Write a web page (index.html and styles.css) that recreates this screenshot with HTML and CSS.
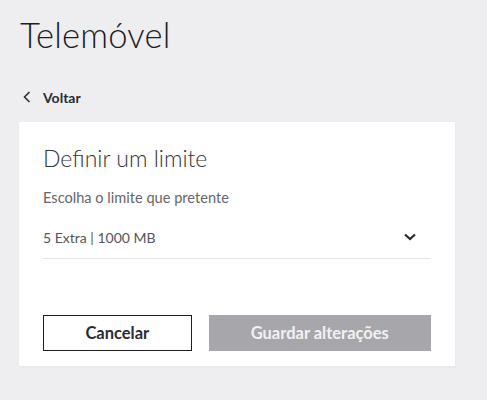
FILE: index.html
```html
<!DOCTYPE html>
<html lang="pt">
<head>
<meta charset="utf-8">
<link rel="stylesheet" href="styles.css">
</head>
<body>
<div class="page">
  <h1 class="title">Telemóvel</h1>
  <a class="back" href="#">
    <svg class="back-icon" width="8" height="12" viewBox="0 0 8 12"><path d="M6.5 1 L1.5 6 L6.5 11" fill="none" stroke="#2b2b33" stroke-width="1.6"/></svg>
    <span>Voltar</span>
  </a>
  <div class="card">
    <h2 class="card-title">Definir um limite</h2>
    <p class="label">Escolha o limite que pretente</p>
    <div class="select">
      <span class="select-value">5 Extra | 1000 MB</span>
      <svg class="select-icon" width="12" height="8" viewBox="0 0 12 8"><path d="M1 1.5 L6 6 L11 1.5" fill="none" stroke="#2b2b33" stroke-width="2.2"/></svg>
    </div>
    <div class="actions">
      <button class="btn btn-outline">Cancelar</button>
      <button class="btn btn-disabled">Guardar alterações</button>
    </div>
  </div>
</div>
</body>
</html>
```
FILE: styles.css
```css
html, body { margin: 0; padding: 0; }
body {
  background: #eeeef1;
  font-family: Lato, "Noto Sans", sans-serif;
  width: 487px;
  height: 400px;
  overflow: hidden;
}
.page { padding: 15px 32px 0 19px; }
.title {
  margin: 0 0 0 1px;
  font-size: 34.6px;
  font-weight: 300;
  color: #1d1d22;
  line-height: 40px;
  letter-spacing: 0.2px;
}
.back {
  display: flex;
  align-items: center;
  gap: 12px;
  margin: 34px 0 0 4px;
  text-decoration: none;
  color: #2b2b33;
  font-weight: 700;
  font-size: 14px;
  height: 16px;
}
.card {
  margin-top: 17px;
  width: 388px;
  background: #fff;
  box-shadow: 0 1px 3px rgba(0,0,0,0.04);
  padding: 22px 24px 15px 24px;
}
.card-title {
  margin: 0;
  font-size: 23px;
  font-weight: 300;
  color: #333338;
  line-height: 28px;
}
.label {
  margin: 17px 0 0;
  font-size: 14.6px;
  color: #66666b;
  line-height: 18px;
}
.select {
  margin-top: 21px;
  display: flex;
  justify-content: space-between;
  align-items: center;
  border-bottom: 1px solid #e6e6e8;
  padding: 0 15px 12px 0;
  height: 18px;
}
.select-value { font-size: 14px; color: #55555a; }
.actions {
  margin-top: 56px;
  display: flex;
  gap: 17px;
}
.btn {
  height: 36px;
  font-family: Lato, "Noto Sans", sans-serif;
  font-size: 16.5px;
  font-weight: 700;
  padding: 0;
}
.btn-outline {
  width: 149px;
  background: #fff;
  border: 1px solid #1d1d22;
  color: #2b2b33;
}
.btn-disabled {
  width: 223px;
  background: #a7a6aa;
  border: none;
  color: #f2f2f4;
}
```
